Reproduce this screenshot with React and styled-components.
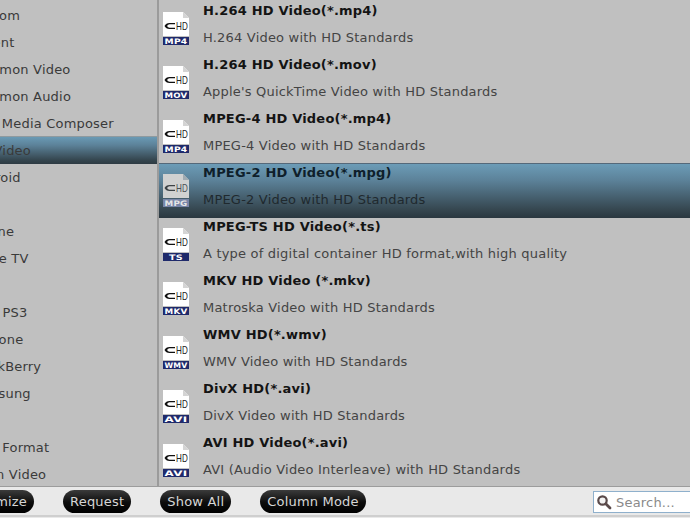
import React from "react";
import styled, { createGlobalStyle } from "styled-components";

const GlobalStyle = createGlobalStyle`
  html, body {
    margin: 0;
    padding: 0;
    overflow: hidden;
    background: #e9e9e9;
  }
`;

const categories = [
  "Custom", "Accent", "Common Video", "Common Audio", "Avid Media Composer",
  "HD Video", "Android", "", "iPhone", "Apple TV", "", "PSP/ PS3", "WPhone",
  "BlackBerry", "Samsung", "", "Web Format", "Open Video",
];

const formats = [
  { tag: "MP4", title: "H.264 HD Video(*.mp4)", desc: "H.264 Video with HD Standards" },
  { tag: "MOV", title: "H.264 HD Video(*.mov)", desc: "Apple's QuickTime Video with HD Standards" },
  { tag: "MP4", title: "MPEG-4 HD Video(*.mp4)", desc: "MPEG-4 Video with HD Standards" },
  { tag: "MPG", title: "MPEG-2 HD Video(*.mpg)", desc: "MPEG-2 Video with HD Standards", active: true },
  { tag: "TS", title: "MPEG-TS HD Video(*.ts)", desc: "A type of digital container HD format,with high quality" },
  { tag: "MKV", title: "MKV HD Video (*.mkv)", desc: "Matroska Video with HD Standards" },
  { tag: "WMV", title: "WMV HD(*.wmv)", desc: "WMV Video with HD Standards" },
  { tag: "AVI", title: "DivX HD(*.avi)", desc: "DivX Video with HD Standards" },
  { tag: "AVI", title: "AVI HD Video(*.avi)", desc: "AVI (Audio Video Interleave) with HD Standards" },
];

const Page = styled.div`
  width: 690px;
  height: 518px;
  display: flex;
  flex-direction: column;
  overflow: hidden;
  font-family: "DejaVu Sans", Verdana, sans-serif;
  font-size: 13px;
  letter-spacing: 0.2px;
`;

const Panels = styled.div`
  height: 487px;
  display: flex;
  background: #c0c0c0;
  border-bottom: 1px solid #9c9c9c;
  box-sizing: border-box;
  overflow: hidden;
`;

const Sidebar = styled.div`
  width: 157px;
  flex: none;
  padding-top: 2px;
  border-right: 2px solid #9b9b9b;
  overflow: hidden;
`;

const Category = styled.div`
  height: 27px;
  line-height: 27px;
  white-space: nowrap;
  color: #3a3a3a;
  background: ${(p) => (p.$active ? "linear-gradient(#6a9ab5, #5c8299 30%, #35464f 85%, #2e3b43)" : "transparent")};
  box-shadow: ${(p) => (p.$active ? "0 -1px 0 #8f9a9f" : "none")};
`;

const CategoryLabel = styled.span`
  display: block;
  margin-left: -31px;
`;

const List = styled.div`
  flex: 1;
  padding-top: 2px;
  overflow: hidden;
`;

const Row = styled.div`
  height: 54px;
  box-sizing: border-box;
  display: flex;
  gap: 13px;
  padding-left: 3px;
  background: ${(p) => (p.$active ? "linear-gradient(#6c9cb7, #5c8299 30%, #35464f 85%, #2a373f)" : "transparent")};
  box-shadow: ${(p) => (p.$active ? "0 -1px 0 #55697a" : "none")};
`;

const Icon = styled.svg`
  width: 28px;
  height: 36px;
  flex: none;
  margin-top: 10px;
`;

const Copy = styled.div`
  display: flex;
  flex-direction: column;
  gap: 11px;
  padding-top: 1px;
  white-space: nowrap;
`;

const Title = styled.div`
  line-height: 16px;
  font-weight: 700;
  color: ${(p) => (p.$active ? "#0f1f2b" : "#141414")};
`;

const Desc = styled.div`
  line-height: 16px;
  color: ${(p) => (p.$active ? "#20292e" : "#444444")};
`;

const Toolbar = styled.div`
  flex: 1;
  display: flex;
  align-items: flex-start;
  gap: 29px;
  padding-top: 3px;
  background: #e9e9e9;
  border-bottom: 2px solid #cfcfcf;
  margin-bottom: 1px;
`;

const Pill = styled.button`
  height: 23px;
  padding: 0 7px;
  border: none;
  border-radius: 12px;
  background: linear-gradient(#3b3b3b, #0c0c0c 55%, #000000);
  color: #d6d6d6;
  font-family: inherit;
  font-size: 13px;
  letter-spacing: 0.2px;
  white-space: nowrap;
  &:first-child {
    margin-left: -50px;
  }
`;

const SearchBox = styled.div`
  margin-left: auto;
  margin-top: 1px;
  width: 98px;
  height: 22px;
  box-sizing: border-box;
  display: flex;
  align-items: center;
  gap: 4px;
  padding-left: 2px;
  margin-right: -1px;
  background: #ffffff;
  border: 1px solid #8fb0cc;
  color: #8a8a8a;
`;

const FormatIcon = ({ tag, active }) => (
  <Icon viewBox="0 0 28 36">
    <path d="M1 0H21L27 6V24H1Z" fill={active ? "#d0d1d1" : "#ffffff"} />
    <path d="M21 0L27 6H21Z" fill={active ? "#a0abb2" : "#d4d4d4"} />
    <path
      d="M13 11H7.5Q4 11 2.5 14Q4 17 7.5 17H13V15.8H7.5Q6 15.8 5 14Q6 12.2 7.5 12.2H13Z"
      fill={active ? "#3c4246" : "#111111"}
    />
    <text
      x="14"
      y="18"
      fontFamily="Liberation Sans, sans-serif"
      fontSize="11"
      textLength="12"
      lengthAdjust="spacingAndGlyphs"
      fill={active ? "#4a5055" : "#222222"}
    >
      HD
    </text>
    <rect x="1" y="25" width="26" height="8" fill={active ? "#7886a8" : "#1f2a6b"} />
    <text
      x="14"
      y="32"
      textAnchor="middle"
      fontFamily="DejaVu Sans, sans-serif"
      fontSize="7.5"
      fontWeight="700"
      textLength={tag.length === 2 ? 14 : 23}
      lengthAdjust="spacingAndGlyphs"
      fill={active ? "#e6e6e6" : "#ffffff"}
    >
      {tag}
    </text>
  </Icon>
);

const App = () => (
  <Page>
    <GlobalStyle />
    <Panels>
      <Sidebar>
        {categories.map((name, i) => (
          <Category key={i} $active={name === "HD Video"}>
            <CategoryLabel>{name}</CategoryLabel>
          </Category>
        ))}
      </Sidebar>
      <List>
        {formats.map((f) => (
          <Row key={f.title} $active={f.active}>
            <FormatIcon tag={f.tag} active={f.active} />
            <Copy>
              <Title $active={f.active}>{f.title}</Title>
              <Desc $active={f.active}>{f.desc}</Desc>
            </Copy>
          </Row>
        ))}
      </List>
    </Panels>
    <Toolbar>
      <Pill>Customize</Pill>
      <Pill>Request</Pill>
      <Pill>Show All</Pill>
      <Pill>Column Mode</Pill>
      <SearchBox>
        <svg width="16" height="16" viewBox="0 0 16 16">
          <circle cx="6.5" cy="6.5" r="4.2" fill="#f4f4f4" stroke="#5a4a4a" strokeWidth="2.2" />
          <path d="M10 10l4 4" stroke="#5a4a4a" strokeWidth="2.8" strokeLinecap="round" />
        </svg>
        Search...
      </SearchBox>
    </Toolbar>
  </Page>
);

export default App;
